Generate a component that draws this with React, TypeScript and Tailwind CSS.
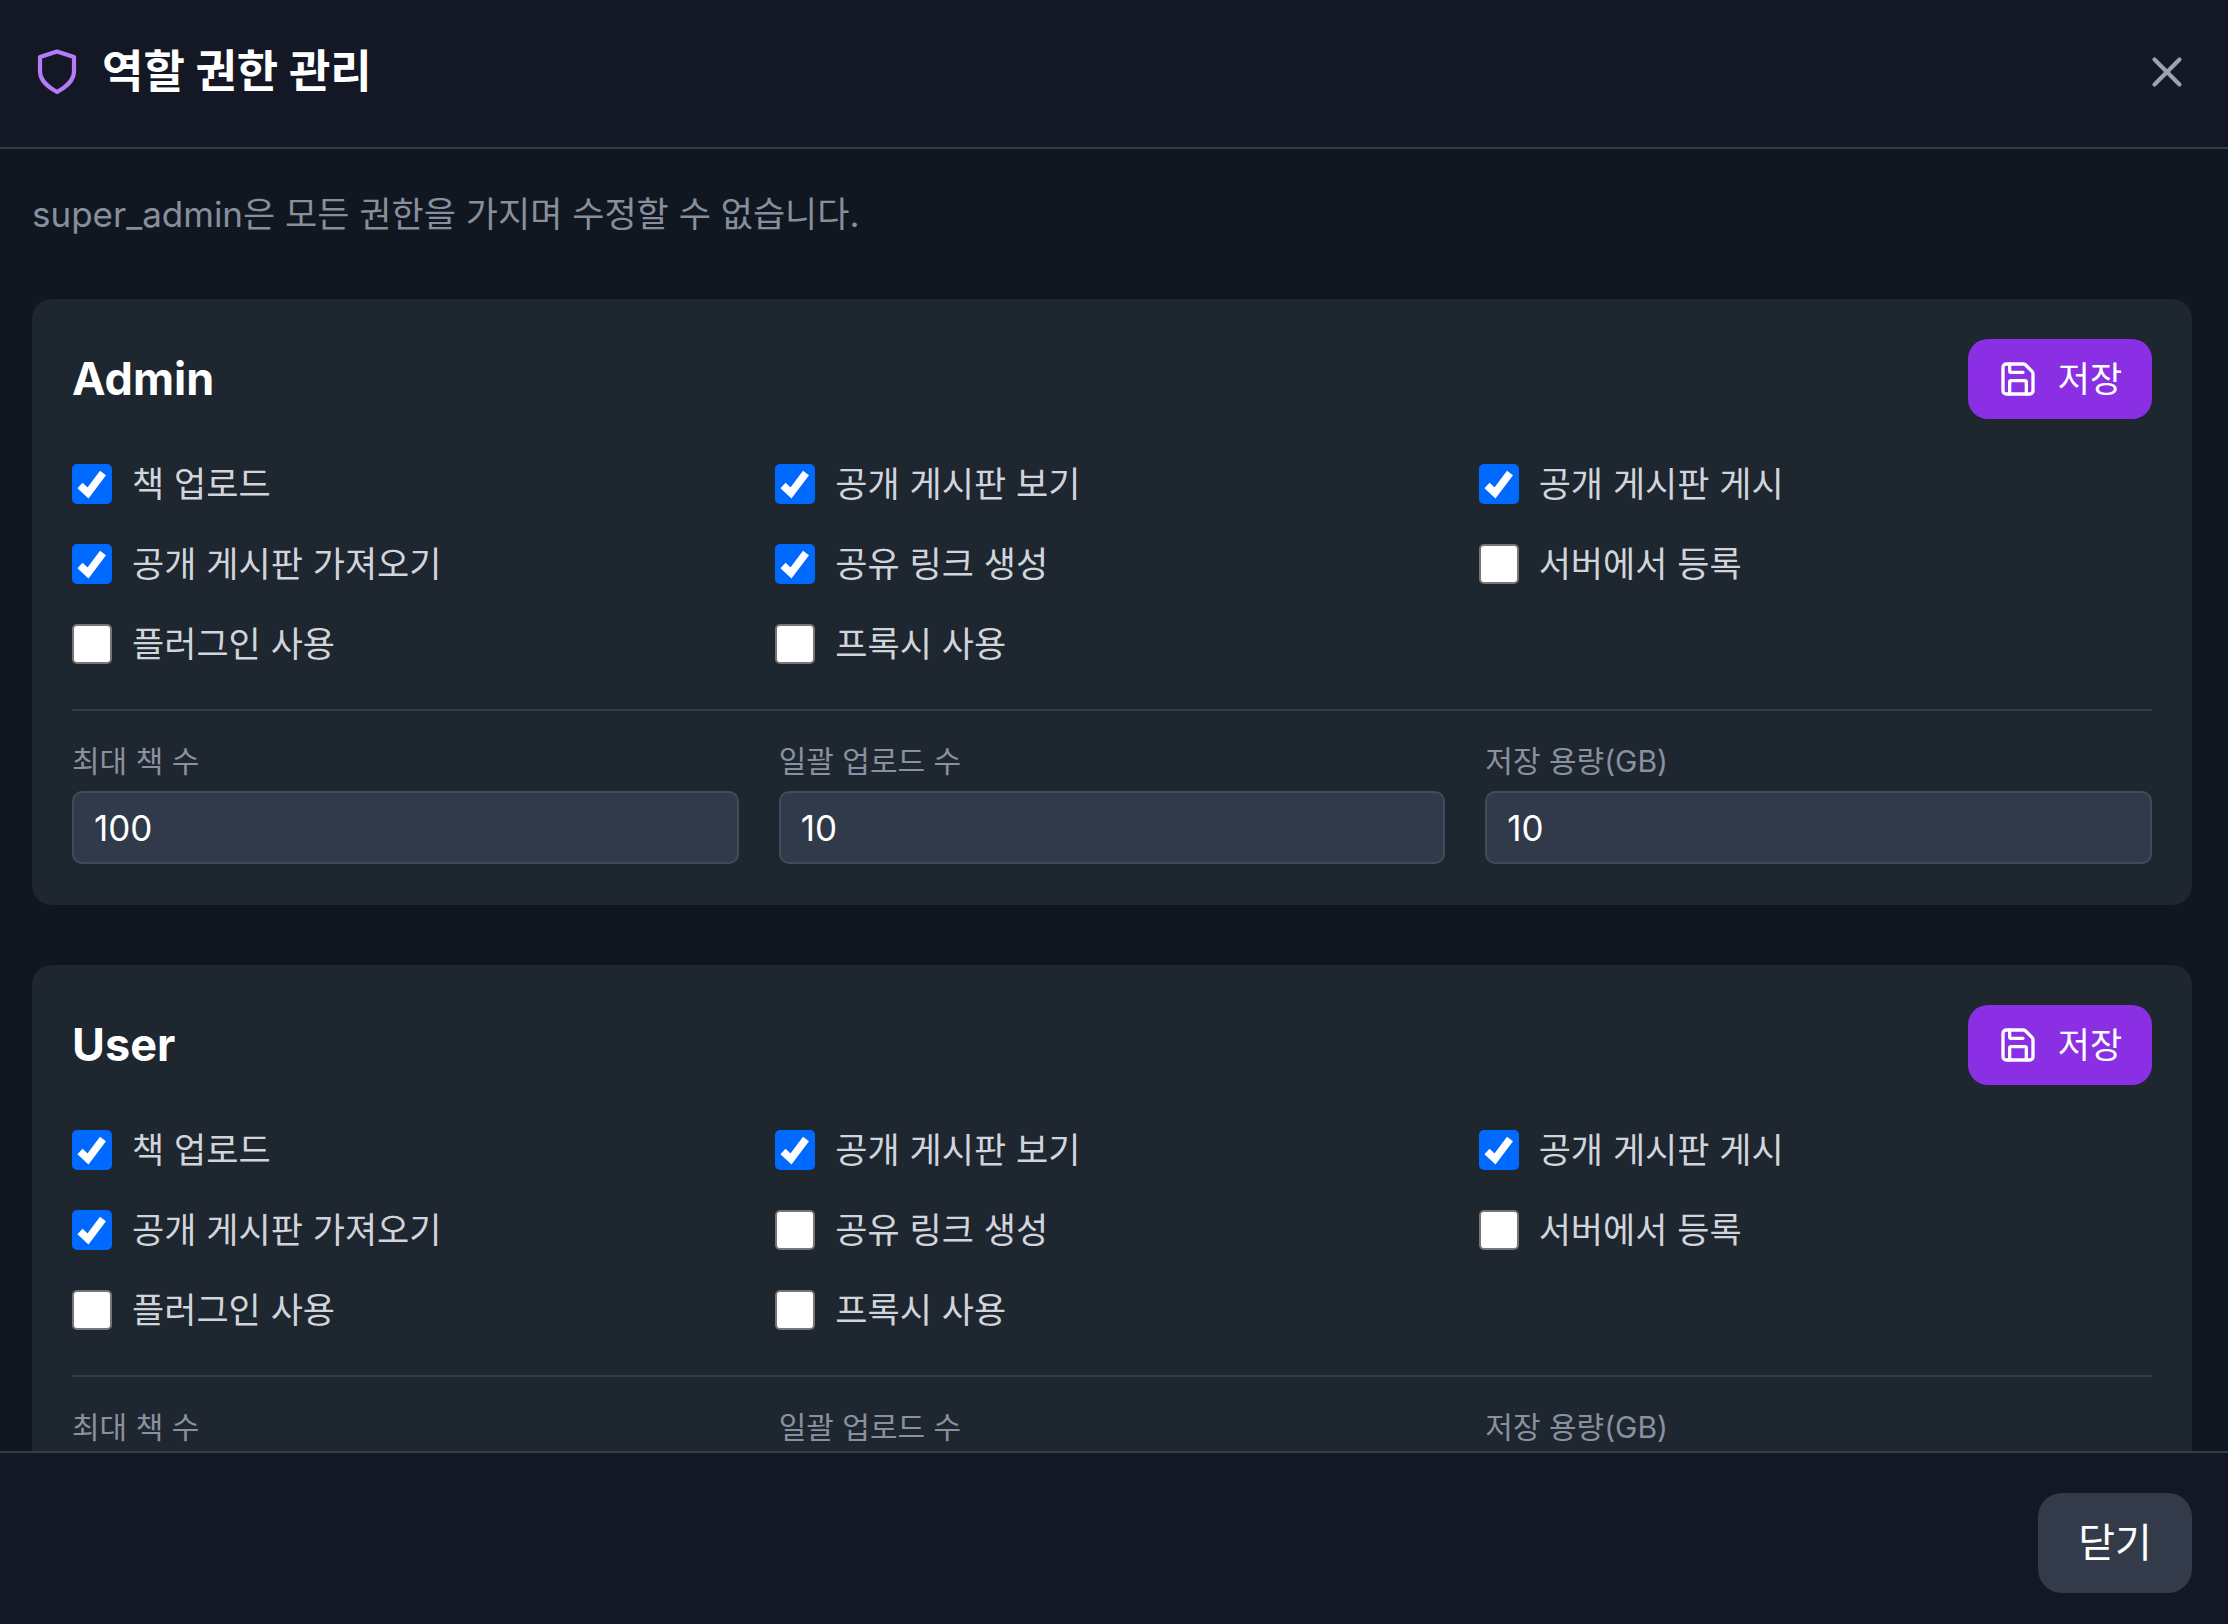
import { Save, X } from "lucide-react";

const PERMS = ["책 업로드", "공개 게시판 보기", "공개 게시판 게시", "공개 게시판 가져오기", "공유 링크 생성", "서버에서 등록", "플러그인 사용", "프록시 사용"];

function Check({ on }: { on: boolean }) {
  return (
    <span className="relative block h-10 w-10 flex-none">
      <input
        type="checkbox"
        defaultChecked={on}
        className="m-0 block h-10 w-10 appearance-none rounded-[5px] border-2 border-[#767676] bg-white checked:border-[#0069ff] checked:bg-[#0069ff]"
      />
      {on && (
        <svg viewBox="0 0 40 40" className="pointer-events-none absolute inset-0 h-10 w-10">
          <path d="M8 21.5 L16 29 L31 9" fill="none" stroke="#ffffff" strokeWidth="7.5" />
        </svg>
      )}
    </span>
  );
}

function RoleCard({ name, checked, limits }: { name: string; checked: boolean[]; limits?: string[] }) {
  return (
    <section className="h-[606px] flex-none overflow-hidden rounded-[20px] bg-[#1e2630] px-10 pt-10">
      <div className="flex h-20 items-center justify-between">
        <h3 className="pb-[2px] text-[45px] leading-none font-bold text-white">{name}</h3>
        <button className="flex h-20 w-[184px] items-center justify-center gap-[20px] rounded-[20px] bg-[#8b2fe4] text-[35px] text-white">
          <Save size={40} strokeWidth={2} />
          <span>저장</span>
        </button>
      </div>
      <div className="mt-[45px] grid grid-cols-3 gap-x-[30px] gap-y-10">
        {PERMS.map((p, i) => (
          <label key={p} className="flex h-10 items-center gap-5 text-[35px] text-[#d1d5db]">
            <Check on={checked[i]} />
            <span>{p}</span>
          </label>
        ))}
      </div>
      <div className="mt-[45px] grid grid-cols-3 gap-x-10 border-t-2 border-[#323c4b] pt-[30px]">
        {["최대 책 수", "일괄 업로드 수", "저장 용량(GB)"].map((l, i) => (
          <div key={l}>
            <div className="text-[30px] leading-10 text-[#8a919e]">{l}</div>
            <input
              readOnly
              value={limits ? limits[i] : ""}
              className="mt-[10px] h-[73px] w-full rounded-[10px] border-2 border-[#414b59] bg-[#303a4a] px-5 text-[35px] text-white outline-none"
            />
          </div>
        ))}
      </div>
    </section>
  );
}

export default function App() {
  return (
    <div className="flex h-screen flex-col overflow-hidden bg-[#141824] font-['Inter','Noto_Sans_CJK_KR',sans-serif]">
      <header className="flex h-[149px] flex-none items-center justify-between border-b-2 border-[#323c4b] pb-[3px] pl-8 pr-9">
        <div className="flex items-center gap-5">
          <svg viewBox="0 0 50 50" className="h-[50px] w-[50px] flex-none text-[#b57bfb]" fill="none" stroke="currentColor" strokeWidth="4.2" strokeLinejoin="round">
            <path d="M25 4.5 L42 10 V24 C42 34 34 40 25 45 C16 40 8 34 8 24 V10 Z" />
          </svg>
          <h2 className="text-[45px] font-bold text-white">역할 권한 관리</h2>
        </div>
        <X size={50} strokeWidth={2} className="text-[#9ca3af]" />
      </header>
      <main className="flex min-h-0 flex-1 flex-col gap-[60px] overflow-hidden bg-[#111720] pl-8 pr-9">
        <p className="h-[90px] flex-none pt-[39px] text-[35px] leading-[52px] text-[#878f9d]">
          super_admin은 모든 권한을 가지며 수정할 수 없습니다.
        </p>
        <RoleCard name="Admin" checked={[true, true, true, true, true, false, false, false]} limits={["100", "10", "10"]} />
        <RoleCard name="User" checked={[true, true, true, true, false, false, false, false]} />
      </main>
      <footer className="flex h-[173px] flex-none items-start justify-end border-t-2 border-[#323c4b] pr-9 pt-[40px]">
        <button className="h-[100px] w-[154px] rounded-[24px] bg-[#333b4a] text-[40px] text-white">닫기</button>
      </footer>
    </div>
  );
}
